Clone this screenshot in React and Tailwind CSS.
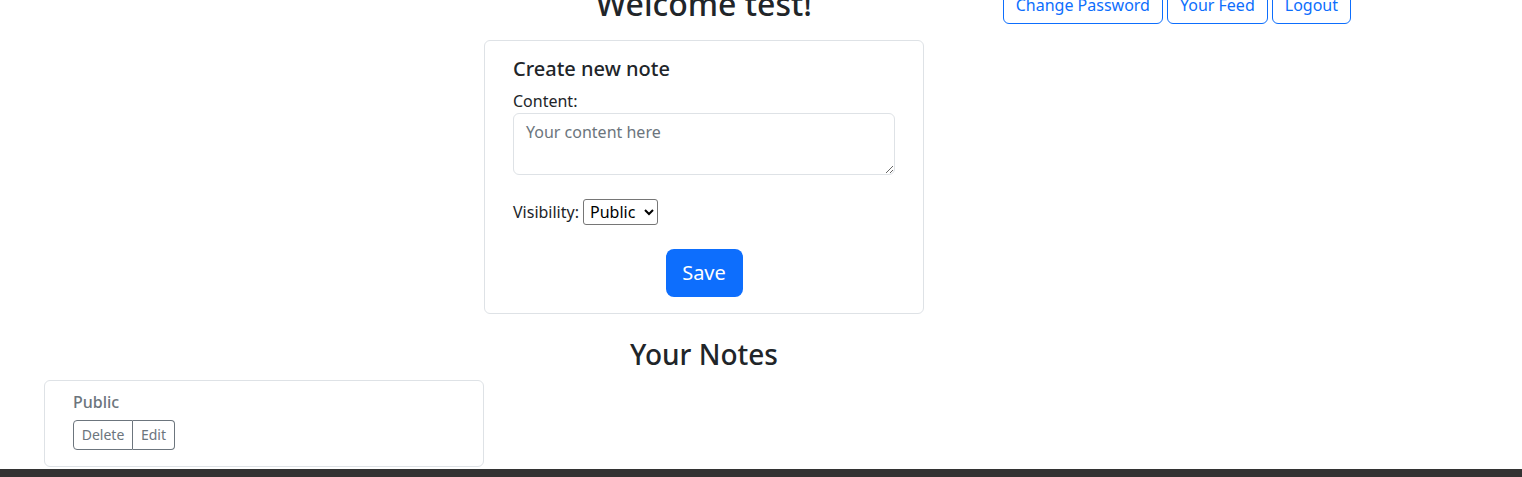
import React, { useState } from 'react';

const notes = [{ id: 1, visibility: 'Public' }];

export default function App() {
  const [content, setContent] = useState('');
  const [visibility, setVisibility] = useState('public');

  return (
    <div className="min-h-[477px] bg-white text-[#212529] font-['Noto_Sans',sans-serif] overflow-hidden">
      <div className="-mt-[15px] ml-[44px] w-[1320px]">
        {/* header row */}
        <div className="grid grid-cols-3">
          <div></div>
          <h2 className="text-[32px] leading-[1.2] font-medium text-center">Welcome test!</h2>
          <div className="flex justify-end gap-1 pr-[13px] pt-px">
            <button className="h-[38px] px-3 border border-[#0d6efd] text-[#0d6efd] rounded-md text-base">Change Password</button>
            <button className="h-[38px] px-3 border border-[#0d6efd] text-[#0d6efd] rounded-md text-base">Your Feed</button>
            <button className="h-[38px] px-3 border border-[#0d6efd] text-[#0d6efd] rounded-md text-base">Logout</button>
          </div>
        </div>

        {/* create note card */}
        <div className="flex justify-center mt-4">
          <div className="w-[440px] border border-[#dee2e6] rounded-md px-7 pt-4 pb-4">
            <h5 className="text-xl leading-6 font-medium mb-2">Create new note</h5>
            <label className="block text-base leading-6">Content:</label>
            <textarea
              rows={2}
              value={content}
              onChange={(e) => setContent(e.target.value)}
              placeholder="Your content here"
              className="block w-full h-[62px] border border-[#dee2e6] rounded-md px-3 py-1.5 text-base leading-6 placeholder:text-[#6c757d]"
            />
            <div className="flex items-center mt-6 h-[26px]">
              <label className="text-base mr-1">Visibility:</label>
              <select
                value={visibility}
                onChange={(e) => setVisibility(e.target.value)}
                className="h-[26px] w-[75px] border border-[#767676] rounded-[3px] text-base text-black pl-0.5"
              >
                <option value="public">Public</option>
                <option value="private">Private</option>
              </select>
            </div>
            <div className="flex justify-center mt-6">
              <button className="h-12 w-[77px] bg-[#0d6efd] text-white text-xl rounded-lg">Save</button>
            </div>
          </div>
        </div>

        <h3 className="text-[28px] leading-[1.2] font-medium text-center mt-6 mb-2">Your Notes</h3>

        <div className="grid grid-cols-3">
          {notes.map((n) => (
            <div key={n.id} className="border border-[#dee2e6] rounded-md px-7 pt-[9px] pb-4">
              <div className="text-base leading-6 font-medium text-[#6c757d]">{n.visibility}</div>
              <div className="flex mt-1.5">
                <button className="h-[30px] w-[60px] border border-[#6c757d] text-[#6c757d] text-sm rounded-l">Delete</button>
                <button className="h-[30px] w-[42px] border border-l-0 border-[#6c757d] text-[#6c757d] text-sm rounded-r">Edit</button>
              </div>
            </div>
          ))}
        </div>
      </div>
      <div className="mt-[2px] h-16 bg-[#333333]"></div>
    </div>
  );
}
